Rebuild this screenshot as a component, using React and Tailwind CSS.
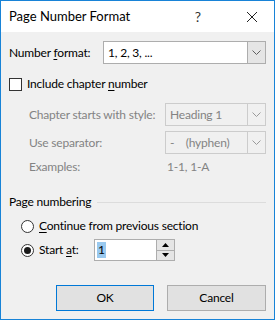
import React from 'react';

const Chevron = ({ color = '#606060' }) => (
  <svg width="9" height="5" viewBox="0 0 9 5" className="block">
    <path d="M0.5 0.5 L4.5 4.5 L8.5 0.5" fill="none" stroke={color} strokeWidth="1" />
  </svg>
);

const Dropdown = ({ value, width, disabled }) => (
  <div
    className={`flex h-[23px] ${width} border ${
      disabled ? 'border-[#cccccc] bg-[#f0f0f0] text-[#838383]' : 'border-[#adadad] bg-white text-black'
    }`}
  >
    <div className="flex flex-1 items-center pl-[4px] whitespace-pre">{value}</div>
    <div
      className={`flex w-[18px] items-center justify-center border-l ${
        disabled ? 'border-[#cccccc] bg-[#f0f0f0]' : 'border-[#adadad] bg-[#e5e5e5]'
      }`}
    >
      <Chevron color={disabled ? '#9a9a9a' : '#606060'} />
    </div>
  </div>
);

const Radio = ({ checked }) => (
  <div className="flex h-[13px] w-[13px] items-center justify-center rounded-full border border-[#333333] bg-white">
    {checked && <div className="h-[7px] w-[7px] rounded-full bg-[#1a1a1a]" />}
  </div>
);

const Triangle = ({ up }) => (
  <svg width="7" height="4" viewBox="0 0 7 4" className="block">
    <path d={up ? 'M0 4 L3.5 0 L7 4 Z' : 'M0 0 L3.5 4 L7 0 Z'} fill="#000" />
  </svg>
);

export default function App() {
  return (
    <div
      className="flex h-[320px] w-[275px] flex-col border border-[#1883d7] text-[12px] leading-none tracking-[-0.2px] whitespace-nowrap text-black"
      style={{ fontFamily: 'Lato, "Noto Sans", sans-serif' }}
    >
      <div className="flex h-[31px] items-center justify-between bg-white pl-[8px] text-[13px] tracking-normal">
        <span>Page Number Format</span>
        <div className="flex items-center">
          <span className="mr-[45px] text-[14px] text-[#333]">?</span>
          <svg width="12" height="12" viewBox="0 0 12 12" className="mr-[16px]">
            <path d="M1 1 L11 11 M11 1 L1 11" stroke="#222" strokeWidth="1" />
          </svg>
        </div>
      </div>

      <div className="flex flex-1 flex-col bg-[#f0f0f0] px-[8px] pt-[9px]">
        <div className="flex h-[23px] items-center">
          <span className="w-[94px]">
            Number <span className="underline underline-offset-2">f</span>ormat:
          </span>
          <Dropdown value="1, 2, 3, ..." width="w-[163px]" />
        </div>

        <div className="mt-[13px] flex h-[14px] items-center">
          <div className="h-[13px] w-[13px] border border-[#333333] bg-white" />
          <span className="ml-[5px]">
            Include chapter <span className="underline underline-offset-2">n</span>umber
          </span>
        </div>

        <div className="mt-[12px] flex h-[23px] items-center pl-[20px] text-[#838383]">
          <span className="flex-1">Chapter starts with style:</span>
          <Dropdown value="Heading 1" width="w-[101px]" disabled />
        </div>

        <div className="mt-[5px] flex h-[23px] items-center pl-[20px] text-[#838383]">
          <span className="flex-1">Use separator:</span>
          <Dropdown value={'-    (hyphen)'} width="w-[101px]" disabled />
        </div>

        <div className="mt-[5px] flex h-[16px] items-center pl-[20px] text-[#838383]">
          <span className="flex-1">Examples:</span>
          <span className="w-[101px] pl-[2px]">1-1, 1-A</span>
        </div>

        <div className="mt-[19px] flex h-[16px] items-center">
          <span>Page numbering</span>
          <div className="ml-[6px] flex-1 border-t border-[#dcdcdc]" />
        </div>

        <div className="mt-[8px] flex h-[16px] items-center pl-[12px]">
          <Radio />
          <span className="ml-[5px]">
            <span className="underline underline-offset-2">C</span>ontinue from previous section
          </span>
        </div>

        <div className="mt-[5px] flex h-[22px] items-center pl-[12px]">
          <Radio checked />
          <span className="ml-[5px] w-[55px]">
            Start <span className="underline underline-offset-2">a</span>t:
          </span>
          <div className="flex h-[22px] w-[81px] border border-[#adadad] bg-white">
            <div className="flex flex-1 items-center pl-[2px]">
              <span className="bg-[#99c9ef] px-[1px] py-[2px]">1</span>
            </div>
            <div className="flex w-[18px] flex-col border-l border-[#adadad]">
              <div className="flex flex-1 items-center justify-center border-b border-[#adadad] bg-[#e5e5e5]">
                <Triangle up />
              </div>
              <div className="flex flex-1 items-center justify-center bg-[#e5e5e5]">
                <Triangle />
              </div>
            </div>
          </div>
        </div>

        <div className="mt-[24px] flex justify-end gap-[13px]">
          <button className="flex h-[26px] w-[98px] items-center justify-center border border-[#0078d7] bg-[#e1e1e1]">
            OK
          </button>
          <button className="flex h-[26px] w-[99px] items-center justify-center border border-[#adadad] bg-[#e1e1e1]">
            Cancel
          </button>
        </div>
      </div>
    </div>
  );
}
